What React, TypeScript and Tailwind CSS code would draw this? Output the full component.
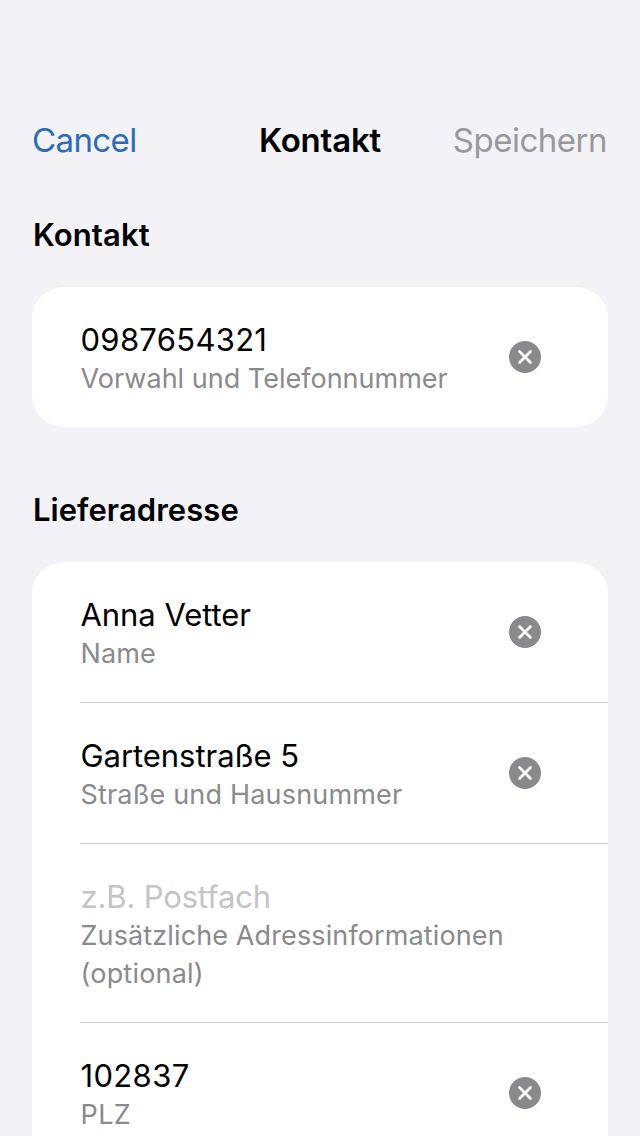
import React from 'react';

type Line = { text: string; tracking: string };
type FieldProps = { value?: Line; placeholder?: Line; labels: Line[]; height: string };

function ClearButton() {
  return (
    <button aria-label="Clear" className="mt-[19px] size-8 shrink-0">
      <svg viewBox="0 0 32 32" className="size-8">
        <circle cx="16" cy="16" r="16" fill="#8a8a8e" />
        <path d="M10.5 10.5 21.5 21.5M21.5 10.5 10.5 21.5" stroke="#fff" strokeWidth="2.7" strokeLinecap="round" />
      </svg>
    </button>
  );
}

function Field({ value, placeholder, labels, height }: FieldProps) {
  const main = value ?? placeholder;
  return (
    <div className={`flex items-start justify-between pr-[67px] pt-[35px] ${height}`}>
      <div className="pl-[0.5px] whitespace-nowrap">
        {main && (
          <p className={`mb-0.5 text-[31px] leading-[36px] ${main.tracking} ${value ? 'text-black' : 'text-[#c4c4c6]'}`}>{main.text}</p>
        )}
        {labels.map((l) => (
          <p key={l.text} className={`text-[27px] leading-[38px] text-[#8a8a8e] ${l.tracking}`}>{l.text}</p>
        ))}
      </div>
      {value && <ClearButton />}
    </div>
  );
}

export default function App() {
  return (
    <div className="h-[1136px] w-[640px] overflow-hidden bg-[#f2f2f7] px-8 pt-[116px] font-['Inter',sans-serif]">
      <header className="grid h-12 grid-cols-[1fr_auto_1fr] items-center text-[33px]">
        <span className="tracking-[-0.6px] text-[#2a6cb8]">Cancel</span>
        <span className="font-semibold tracking-[-0.2px]">Kontakt</span>
        <span className="justify-self-end pr-px tracking-[-0.5px] text-[#999999]">Speichern</span>
      </header>
      <h2 className="mt-[50px] pl-px text-[31px] leading-[42px] font-semibold tracking-[0.15px]">Kontakt</h2>
      <section className="mt-[31px] rounded-[32px] bg-white pl-12">
        <Field
          value={{ text: '0987654321', tracking: 'tracking-[0.3px]' }}
          labels={[{ text: 'Vorwahl und Telefonnummer', tracking: 'tracking-[0.01px]' }]}
          height="h-[140px]"
        />
      </section>
      <h2 className="mt-[62px] pl-px text-[31px] leading-[42px] font-semibold tracking-[0.05px]">Lieferadresse</h2>
      <section className="mt-[31px] divide-y divide-[#c6c6c8] rounded-t-[32px] bg-white pl-12">
        <Field
          value={{ text: 'Anna Vetter', tracking: 'tracking-[-0.05px]' }}
          labels={[{ text: 'Name', tracking: 'tracking-[0.1px]' }]}
          height="h-[141px]"
        />
        <Field
          value={{ text: 'Gartenstraße 5', tracking: 'tracking-[-0.05px]' }}
          labels={[{ text: 'Straße und Hausnummer', tracking: 'tracking-[0.18px]' }]}
          height="h-[141px]"
        />
        <Field
          placeholder={{ text: 'z.B. Postfach', tracking: 'tracking-[-0.15px]' }}
          labels={[
            { text: 'Zusätzliche Adressinformationen', tracking: 'tracking-[0.12px]' },
            { text: '(optional)', tracking: 'tracking-[0.2px]' },
          ]}
          height="h-[179px]"
        />
        <Field
          value={{ text: '102837', tracking: 'tracking-[0.35px]' }}
          labels={[{ text: 'PLZ', tracking: 'tracking-[0.4px]' }]}
          height="h-[141px]"
        />
      </section>
    </div>
  );
}
